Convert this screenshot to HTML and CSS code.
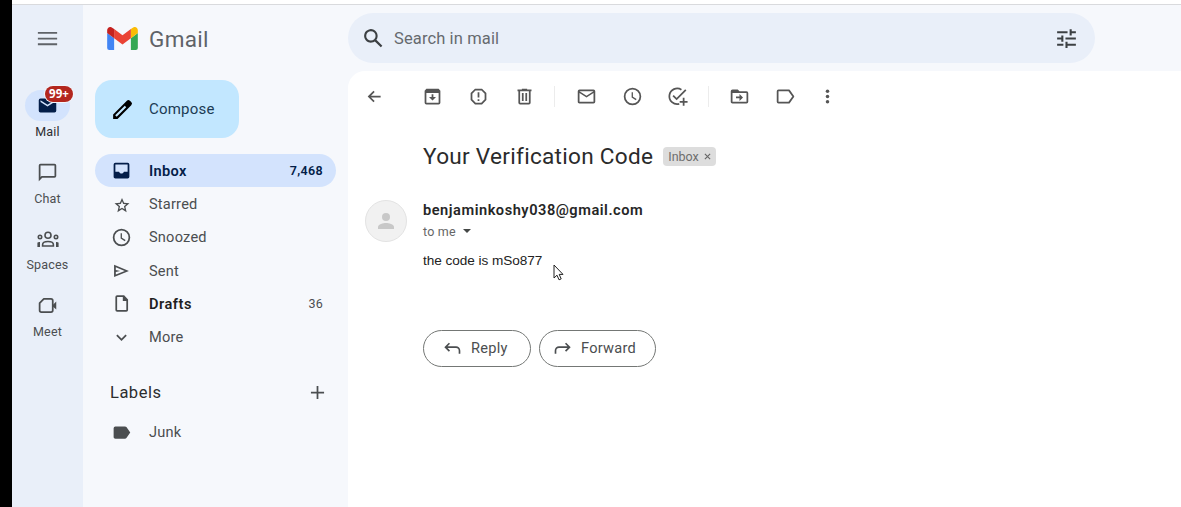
FILE: index.html
```html
<!DOCTYPE html>
<html lang="en">
<head>
<meta charset="utf-8">
<title>Gmail</title>
<link rel="stylesheet" href="styles.css">
</head>
<body>
<svg class="sprite" aria-hidden="true">
  <symbol id="clock" viewBox="0 0 24 24"><path d="M12 2a10 10 0 1 0 0 20 10 10 0 0 0 0-20zm0 18a8 8 0 1 1 0-16 8 8 0 0 1 0 16zm.5-13H11v6l4.800 3.200.9-1.400-4.200-2.600z"/></symbol>
</svg>
<div class="edge"></div>
<div class="app">
  <nav class="rail">
    <button class="menu"><svg class="i21" viewBox="0 0 24 24"><path d="M1 4.500h22v2.200H1zm0 6.500h22v2.200H1zm0 6.500h22v2.200H1z"/></svg></button>
    <a class="rail-item active"><span class="pill"><svg class="i21" viewBox="0 0 24 24"><path d="M20 4H4a2 2 0 0 0-2 2v12a2 2 0 0 0 2 2h16a2 2 0 0 0 2-2V6a2 2 0 0 0-2-2zm0 4-8 5-8-5V6l8 5 8-5z"/></svg><b class="badge">99+</b></span><span class="rail-label">Mail</span></a>
    <a class="rail-item"><span class="pill"><svg class="i21" viewBox="0 0 24 24"><path d="M20 2H4a2 2 0 0 0-2 2v18l4-4h14a2 2 0 0 0 2-2V4a2 2 0 0 0-2-2zm0 14H5.200L4 17.200V4h16z"/></svg></span><span class="rail-label">Chat</span></a>
    <a class="rail-item"><span class="pill"><svg class="i24 line" viewBox="0 0 24 24"><circle cx="12" cy="8.300" r="3"/><circle cx="4" cy="10" r="1.700"/><circle cx="20" cy="10" r="1.700"/><path d="M6.600 19v-1.300c0-2 2.400-3.200 5.400-3.200s5.400 1.200 5.400 3.200V19zM2.200 20v-4.500M3.200 20v-5M21.800 20v-4.500M20.800 20v-5"/></svg></span><span class="rail-label">Spaces</span></a>
    <a class="rail-item"><span class="pill"><svg class="i21" viewBox="0 0 24 24"><path fill="none" stroke="currentColor" stroke-width="2" stroke-linejoin="round" d="M7.800 4.500H16a2 2 0 0 1 2 2v11a2 2 0 0 1-2 2H5a2 2 0 0 1-2-2V9.300z"/><path d="M18 11.500 22 7.500v9l-4-3.500z"/></svg></span><span class="rail-label">Meet</span></a>
  </nav>

  <aside class="side">
    <div class="brand">
      <svg class="logo" viewBox="52 42 88 66"><path fill="#4285f4" d="M58 108h14V74L52 59v43a6 6 0 0 0 6 6"/><path fill="#34a853" d="M120 108h14a6 6 0 0 0 6-6V59l-20 15"/><path fill="#fbbc04" d="M120 48v26l20-15v-8c0-7.420-8.470-11.650-14.400-7.200"/><path fill="#ea4335" d="M72 74V48l24 18 24-18v26L96 92"/><path fill="#c5221f" d="M52 51v8l20 15V48l-5.600-4.200C60.470 39.350 52 43.580 52 51"/></svg>
      <span class="brand-name">Gmail</span>
    </div>
    <button class="compose"><svg class="i25" viewBox="0 0 24 24"><path d="M20.400 4.900 19.100 3.600a2 2 0 0 0-2.900 0L3 16.800V21h4.200L20.400 7.800a2 2 0 0 0 0-2.900zM6.400 19 5 17.600l9.200-9.200 1.400 1.400z"/></svg><span>Compose</span></button>
    <ul class="folders">
      <li class="folder selected"><svg class="i21" viewBox="0 0 24 24"><path d="M19 3H5a2 2 0 0 0-2 2v14c0 1.100.9 2 2 2h14a2 2 0 0 0 2-2V5a2 2 0 0 0-2-2zm0 10.500h-4.200c-.5 1.400-1.500 2-2.800 2s-2.300-.6-2.800-2H5V5h14z"/></svg><span class="name">Inbox</span><span class="count">7,468</span></li>
      <li class="folder"><svg class="i21 star" viewBox="0 0 24 24"><path d="m22 9.740-7.190-.62L12 2.500 9.190 9.130 2 9.740l5.460 4.730L5.820 21.500 12 17.770l6.180 3.730-1.630-7.030zM12 15.600l-3.500 2.100.93-3.980-3.080-2.670 4.070-.35L12 6.950l1.590 3.760 4.070.35-3.080 2.670.93 3.980z"/></svg><span class="name">Starred</span></li>
      <li class="folder"><svg class="i21"><use href="#clock"/></svg><span class="name">Snoozed</span></li>
      <li class="folder"><svg class="i21" viewBox="0 0 24 24"><path d="M3.500 19.500v-14L20.500 12.500zm2-2.800 10.200-4.200L5.500 8.300v3.100l5 1.100-5 1.100z"/></svg><span class="name">Sent</span></li>
      <li class="folder unread"><svg class="i21" viewBox="0 0 24 24"><path d="M15 2.500H7a2 2 0 0 0-2 2v15a2 2 0 0 0 2 2h10.500a2 2 0 0 0 2-2V7.500zM7 19.500v-15h6.500V9h4v10.500z"/></svg><span class="name">Drafts</span><span class="count">36</span></li>
      <li class="folder"><svg class="i21" viewBox="0 0 24 24"><path d="M7.410 8.590 12 13.170l4.590-4.580L18 10l-6 6-6-6z"/></svg><span class="name">More</span></li>
    </ul>
    <div class="labels-head"><span>Labels</span><svg class="i21" viewBox="0 0 24 24"><path d="M19.500 13H13v6.500h-2V13H4.500v-2H11V4.500h2V11h6.500z"/></svg></div>
    <div class="folder junk"><svg class="i21" viewBox="0 0 24 24"><path d="M3 7v10c0 1.100.9 2 2 2h11c.67 0 1.270-.33 1.630-.84L22 12l-4.370-6.160A2 2 0 0 0 16 5H5a2 2 0 0 0-2 2z"/></svg><span class="name">Junk</span></div>
  </aside>

  <main class="content">
    <div class="search">
      <svg class="i25" viewBox="0 0 24 24"><path d="M20.490 19l-5.730-5.730A6.500 6.500 0 1 0 13.270 14.760L19 20.490zM5 9.500a4.500 4.500 0 1 1 9 0 4.500 4.500 0 0 1-9 0z"/></svg>
      <span class="search-text">Search in mail</span>
      <svg class="i25" viewBox="0 0 24 24"><path d="M3 17v2h6v-2zM3 5v2h10V5zm10 16v-2h8v-2h-8v-2h-2v6zM7 9v2H3v2h4v2h2V9zm14 4v-2H11v2zm-6-4h2V7h4V5h-4V3h-2z"/></svg>
    </div>
    <section class="message">
      <div class="toolbar">
        <span class="tool back"><svg class="i21" viewBox="0 0 24 24"><path d="M19 11H8l4.200-4.200L10.800 5.400 4.200 12l6.600 6.600 1.400-1.400L8 13h11z"/></svg></span>
        <span class="tool"><svg class="i21" viewBox="0 0 24 24"><path d="M19 3H5L3 5.500V19a2 2 0 0 0 2 2h14a2 2 0 0 0 2-2V5.500zM5 19V8h14v11zM11 9.500h2v3h3l-4 4-4-4h3z"/></svg></span>
        <span class="tool"><svg class="i21" viewBox="0 0 24 24"><path fill="none" stroke="currentColor" stroke-width="2" d="M8.400 4h7.200L20 8.400v7.200L15.600 20H8.400L4 15.600V8.400z"/><path d="M11 7h2v6h-2zm0 8h2v2h-2z"/></svg></span>
        <span class="tool"><svg class="i21" viewBox="0 0 24 24"><path d="M15 4V3H9v1H4v2h1v13a2 2 0 0 0 2 2h10a2 2 0 0 0 2-2V6h1V4zm2 15H7V6h10zM9 8h2v9H9zm4 0h2v9h-2z"/></svg></span>
        <i class="rule"></i>
        <span class="tool"><svg class="i21" viewBox="0 0 24 24"><path d="M20 4H4a2 2 0 0 0-2 2v12c0 1.100.9 2 2 2h16a2 2 0 0 0 2-2V6a2 2 0 0 0-2-2zm0 14H4V8l8 5 8-5zm-8-7L4 6h16z"/></svg></span>
        <span class="tool"><svg class="i21"><use href="#clock"/></svg></span>
        <span class="tool"><svg class="i21" viewBox="0 0 24 24"><path fill="none" stroke="currentColor" stroke-width="2" d="M16.500 4.200A9 9 0 1 0 14 20.500M7 11l4 4L21.500 4.500"/><path d="M18 13.500h2v3.500h3.500v2H20v3.500h-2V19h-3.500v-2H18z"/></svg></span>
        <i class="rule"></i>
        <span class="tool"><svg class="i21" viewBox="0 0 24 24"><path d="M20 6h-8l-2-2H4a2 2 0 0 0-2 2v12c0 1.100.9 2 2 2h16a2 2 0 0 0 2-2V8a2 2 0 0 0-2-2zm0 12H4V8h16zm-8-1 4-4-4-4v3H8v2h4z"/></svg></span>
        <span class="tool"><svg class="i21" viewBox="0 0 24 24"><path fill="none" stroke="currentColor" stroke-width="2" stroke-linejoin="round" d="M4 5h12l5 7-5 7H4a1 1 0 0 1-1-1V6a1 1 0 0 1 1-1z"/></svg></span>
        <span class="tool more"><svg class="i21" viewBox="0 0 24 24"><circle cx="12" cy="6" r="2"/><circle cx="12" cy="12" r="2"/><circle cx="12" cy="18" r="2"/></svg></span>
      </div>
      <div class="subject"><h1>Your Verification Code</h1><span class="chip">Inbox<svg viewBox="0 0 8 8"><path d="m1 1 6 6M7 1 1 7"/></svg></span></div>
      <div class="mail">
        <div class="avatar"><svg class="i25" viewBox="0 0 24 24"><circle cx="12" cy="8" r="4"/><path d="M12 14c-2.670 0-8 1.340-8 4v2h16v-2c0-2.660-5.330-4-8-4z"/></svg></div>
        <div class="body">
          <div class="sender">benjaminkoshy038@gmail.com</div>
          <div class="to"><span>to me</span><i class="caret"></i></div>
          <p class="text">the code is mSo877</p>
          <div class="actions">
            <button class="action reply"><svg class="i21" viewBox="0 0 24 24"><path d="m8.500 6-4.500 4.500 4.500 4.500M4.500 10.500H16a4 4 0 0 1 4 4v3.500"/></svg><span>Reply</span></button>
            <button class="action forward"><svg class="i21" viewBox="0 0 24 24"><path d="m15.500 6 4.500 4.500-4.500 4.500M19.500 10.500H8a4 4 0 0 0-4 4v3.500"/></svg><span>Forward</span></button>
          </div>
        </div>
      </div>
    </section>
  </main>
</div>
<svg class="cursor" viewBox="0 0 11 17"><path d="M1 1v13l3-2.800 2 4.600 2.200-.9-2-4.500H10z"/></svg>
</body>
</html>
```

FILE: styles.css
```css
* { box-sizing: border-box; }
body { margin: 0; height: 507px; display: flex; overflow: hidden; background: #fff; font-family: Roboto, "Liberation Sans", sans-serif; color: #4b4e50; }
button { font: inherit; color: inherit; border: 0; background: none; padding: 0; }
svg { display: block; fill: currentColor; flex: none; }
.sprite { display: none; }
.i21 { width: 21px; height: 21px; }
.i24 { width: 24px; height: 24px; }
.i25 { width: 25px; height: 25px; }
.line { fill: none; stroke: currentColor; stroke-width: 1.600; }
.edge { width: 12px; background: #000; flex: none; }
.app { flex: 1; min-width: 0; margin-top: 4px; border-top: 1px solid #d9dadd; background: #f6f8fc; display: flex; }

.rail { width: 71px; background: #e9eff9; display: flex; flex-direction: column; align-items: center; flex: none; }
.menu { height: 66px; margin-bottom: 19px; color: #5f6368; }
.rail-item { height: 66.600px; display: flex; flex-direction: column; align-items: center; }
.pill { width: 45px; height: 31px; border-radius: 16px; display: flex; align-items: center; justify-content: center; position: relative; }
.active .pill { background: #d3e3fd; color: #041e49; }
.badge { position: absolute; left: 20px; top: -4px; height: 16px; width: 28px; border-radius: 8px; background: #b3261e; box-shadow: 0 0 0 1px #f3f5fb; color: #fff; font: 700 11.500px/16px "Open Sans", sans-serif; text-align: center; letter-spacing: .1px; }
.rail-label { font-size: 12.500px; line-height: 16px; margin-top: 3px; letter-spacing: .2px; }
.active .rail-label { color: #2c2e30; }

.side { width: 265px; flex: none; padding: 0 12px; }
.brand { height: 67px; padding-left: 12px; display: flex; align-items: center; gap: 11px; }
.logo { width: 31px; height: 23px; }
.brand-name { font: 400 22.500px/28px Roboto, sans-serif; color: #5f6368; letter-spacing: .3px; }
.compose { width: 144px; height: 58px; margin-top: 8px; border-radius: 17px; background: #c2e7ff; display: flex; align-items: center; padding-left: 15px; gap: 14px; font-size: 15px; letter-spacing: .2px; color: #1c3c55; }
.compose svg { color: #000; }
.folders { list-style: none; margin: 16px 0 0; padding: 0; }
.folder { height: 33.300px; width: 241px; border-radius: 17px; padding: 0 13px 0 16px; display: flex; align-items: center; font-size: 14.600px; letter-spacing: .2px; }
.star { width: 18px; height: 18px; margin: 2px 1px 0 2px; }
.name { flex: 1; margin-left: 17px; }
.count { font-size: 12.500px; }
.selected { background: #d3e3fd; color: #041e49; font-weight: 600; letter-spacing: .35px; }
.unread .name { font-weight: 600; color: #1f1f1f; letter-spacing: .5px; }
.labels-head { height: 33px; margin-top: 22px; padding: 0 8px 0 15px; display: flex; align-items: center; justify-content: space-between; font-size: 16.500px; letter-spacing: .5px; color: #2b2d2e; }
.labels-head svg { color: #4b4e50; }
.junk { margin-top: 7px; }

.content { flex: 1; min-width: 0; display: flex; flex-direction: column; }
.search { width: 747px; height: 50px; margin-top: 8px; border-radius: 25px; background: #e9eff9; padding: 0 16px 0 13px; display: flex; align-items: center; color: #3c4043; }
.search-text { flex: 1; margin-left: 8px; font-size: 16.500px; letter-spacing: .12px; color: #666a6f; }
.message { flex: 1; margin-top: 8px; background: #fff; border-top-left-radius: 17px; }
.toolbar { height: 51px; padding-left: 4px; display: flex; align-items: center; color: #555; }
.tool { width: 45.850px; display: flex; justify-content: center; }
.back { margin-right: 12px; }
.more { width: 37px; }
.rule { width: 1px; height: 21px; background: #ececec; margin: 0 8px 0 7px; }
.subject { height: 69px; padding-left: 75px; display: flex; align-items: center; gap: 10px; }
h1 { margin: 0; font: 400 22.600px/30px Roboto, sans-serif; letter-spacing: .28px; color: #2b2b2b; }
.chip { height: 19px; width: 53px; border-radius: 4px; background: #ddd; color: #6d6d6d; font-size: 12.500px; display: flex; align-items: center; justify-content: space-between; padding: 0 5px; }
.chip svg { width: 7px; height: 7px; stroke: #666; stroke-width: 1.300; }
.mail { display: flex; padding: 9px 0 0 17px; gap: 16px; }
.avatar { width: 42px; height: 42px; border-radius: 50%; border: 1px solid #e3e3e3; background: #f1f1f1; color: #c8c8c8; display: flex; align-items: center; justify-content: center; }
.avatar svg { width: 24px; height: 24px; }
.sender { font-size: 14.600px; font-weight: 600; line-height: 20px; letter-spacing: .53px; color: #262626; }
.to { display: flex; align-items: center; gap: 7px; height: 22px; font-size: 12.500px; color: #666; letter-spacing: .2px; }
.caret { border: 4.500px solid transparent; border-top-color: #444746; border-bottom: 0; }
.text { margin: 9px 0 0; font: 13.600px/20px "Liberation Sans", sans-serif; letter-spacing: -.05px; color: #222; }
.actions { display: flex; gap: 8px; margin-top: 59px; }
.action { height: 37px; border: 1px solid #747775; border-radius: 19px; display: flex; align-items: center; font-size: 14.600px; letter-spacing: .25px; padding: 0 0 1px 18px; }
.action svg { fill: none; stroke: currentColor; stroke-width: 1.900; margin: 1px 8px 0 0; }
.reply { width: 108px; }
.forward { width: 117px; padding-left: 12px; }
.cursor { position: absolute; left: 553px; top: 264px; width: 11px; height: 17px; fill: #fff; stroke: #222; stroke-width: 1; }
```
